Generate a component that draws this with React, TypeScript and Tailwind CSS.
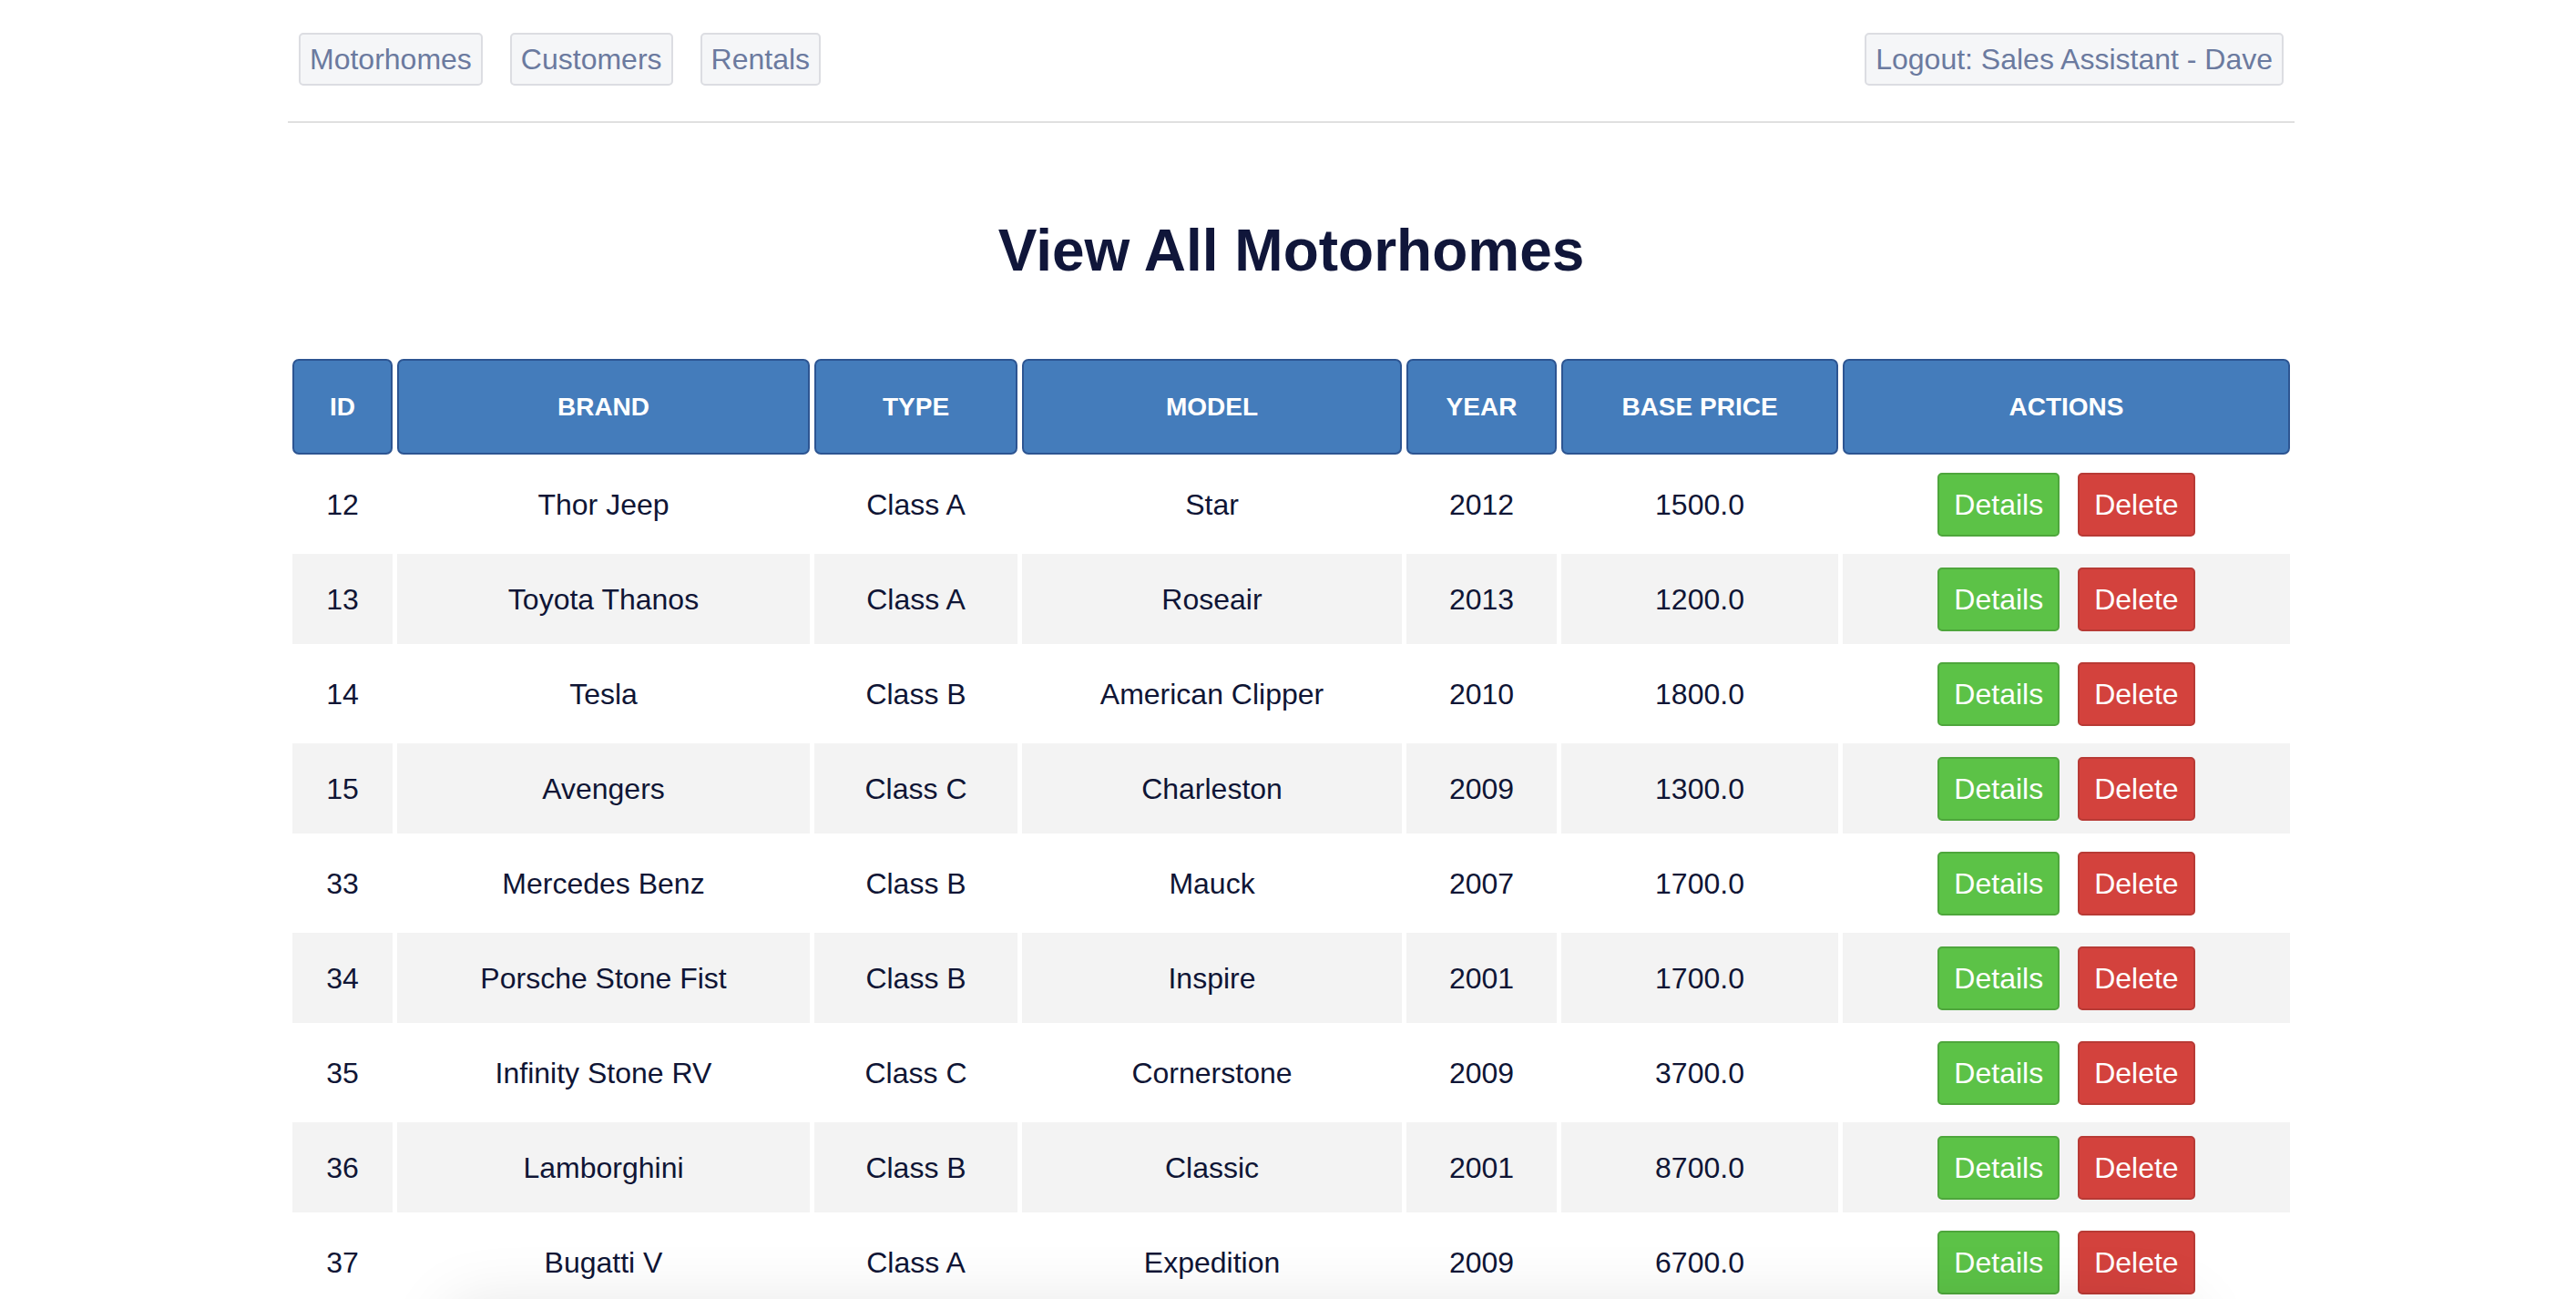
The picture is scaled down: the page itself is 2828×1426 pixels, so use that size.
import React from 'react';

const MOTORHOMES = [
  { id: 12, brand: 'Thor Jeep', type: 'Class A', model: 'Star', year: 2012, price: '1500.0' },
  { id: 13, brand: 'Toyota Thanos', type: 'Class A', model: 'Roseair', year: 2013, price: '1200.0' },
  { id: 14, brand: 'Tesla', type: 'Class B', model: 'American Clipper', year: 2010, price: '1800.0' },
  { id: 15, brand: 'Avengers', type: 'Class C', model: 'Charleston', year: 2009, price: '1300.0' },
  { id: 33, brand: 'Mercedes Benz', type: 'Class B', model: 'Mauck', year: 2007, price: '1700.0' },
  { id: 34, brand: 'Porsche Stone Fist', type: 'Class B', model: 'Inspire', year: 2001, price: '1700.0' },
  { id: 35, brand: 'Infinity Stone RV', type: 'Class C', model: 'Cornerstone', year: 2009, price: '3700.0' },
  { id: 36, brand: 'Lamborghini', type: 'Class B', model: 'Classic', year: 2001, price: '8700.0' },
  { id: 37, brand: 'Bugatti V', type: 'Class A', model: 'Expedition', year: 2009, price: '6700.0' },
];

const HEADERS = [
  { label: 'ID', w: 'w-[110px]' },
  { label: 'Brand', w: 'w-[453px]' },
  { label: 'Type', w: 'w-[223px]' },
  { label: 'Model', w: 'w-[417px]' },
  { label: 'Year', w: 'w-[165px]' },
  { label: 'Base Price', w: 'w-[304px]' },
  { label: 'Actions', w: 'w-[491px]' },
];

function NavButton({ children }: { children: React.ReactNode }) {
  return (
    <a className="block h-[58px] px-[10px] leading-[54px] text-[32px] text-[#6b7a9f] bg-[#f5f6f8] border-2 border-[#dcdde2] rounded-[5px] cursor-pointer">
      {children}
    </a>
  );
}

export default function App() {
  return (
    <div className="relative h-[1426px] bg-white font-['Liberation_Sans',Arial,sans-serif] text-[#0f1535] overflow-hidden">
      <div className="w-[2203px] ml-[316px]">
        <nav className="flex items-center justify-between pt-[36px] pb-[39px] px-[12px] border-b-2 border-[#e0e0e0]">
          <div className="flex gap-[30px]">
            <NavButton>Motorhomes</NavButton>
            <NavButton>Customers</NavButton>
            <NavButton>Rentals</NavButton>
          </div>
          <NavButton>Logout: Sales Assistant - Dave</NavButton>
        </nav>

        <h1 className="mt-[103px] mb-[77px] text-center text-[64px] font-bold leading-[74px] text-[#10163a]">
          View All Motorhomes
        </h1>

        <table className="w-full border-separate border-spacing-[5px] text-[32px]">
          <thead>
            <tr>
              {HEADERS.map(h => (
                <th
                  key={h.label}
                  className={`${h.w} h-[105px] bg-[#447cbb] border-2 border-[#2d5592] rounded-[7px] text-white text-[28px] font-bold uppercase`}
                >
                  {h.label}
                </th>
              ))}
            </tr>
          </thead>
          <tbody>
            {MOTORHOMES.map((m, i) => (
              <tr key={m.id} className={i % 2 === 1 ? 'bg-[#f3f3f3]' : ''}>
                <td className="h-[99px] text-center">{m.id}</td>
                <td className="text-center">{m.brand}</td>
                <td className="text-center">{m.type}</td>
                <td className="text-center">{m.model}</td>
                <td className="text-center">{m.year}</td>
                <td className="text-center">{m.price}</td>
                <td className="text-center">
                  <div className="flex justify-center gap-[20px]">
                    <button className="h-[70px] px-[16px] text-white bg-[#5cc247] border-2 border-[#4ea63c] rounded-[5px]">
                      Details
                    </button>
                    <button className="h-[70px] px-[16px] text-white bg-[#d3423d] border-2 border-[#b83a35] rounded-[5px]">
                      Delete
                    </button>
                  </div>
                </td>
              </tr>
            ))}
          </tbody>
        </table>
      </div>

      {/* shadow of a floating panel just below the fold */}
      <div className="absolute left-[500px] top-[1440px] w-[1900px] h-[200px] rounded-[20px] bg-white shadow-[0_0_70px_10px_rgba(0,0,0,0.10)]" />
    </div>
  );
}
